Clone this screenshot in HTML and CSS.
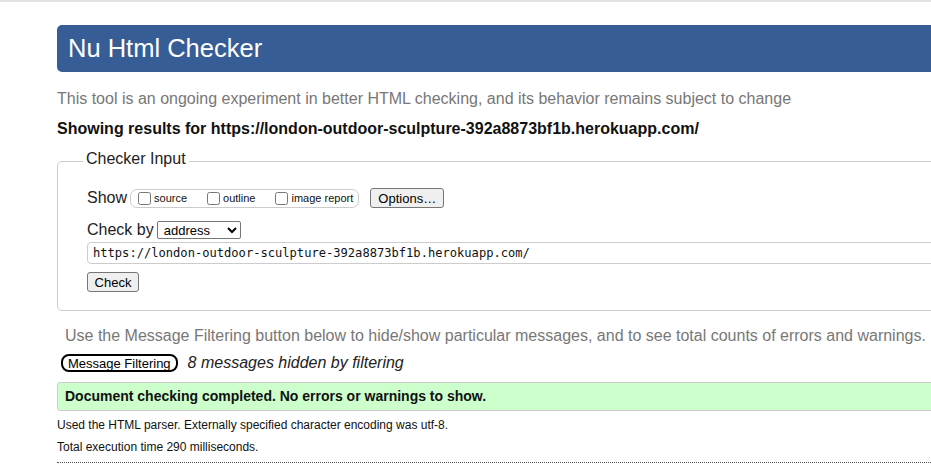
FILE: index.html
```html
<!DOCTYPE html>
<html lang="en">
<head>
<meta charset="utf-8">
<title>Nu Html Checker</title>
<link rel="stylesheet" href="styles.css">
</head>
<body>
<div class="topbar"></div>
<div class="page">
  <h1 class="title">Nu Html Checker</h1>
  <p class="intro">This tool is an ongoing experiment in better HTML checking, and its behavior remains subject to change</p>
  <p class="showing">Showing results for https://london-outdoor-sculpture-392a8873bf1b.herokuapp.com/</p>
  <fieldset class="input-box">
    <legend class="legend">Checker Input</legend>
    <div class="row show-row">
      <span class="label">Show</span>
      <span class="opts">
        <label class="opt"><input type="checkbox" class="cb">source</label>
        <label class="opt"><input type="checkbox" class="cb">outline</label>
        <label class="opt"><input type="checkbox" class="cb">image report</label>
      </span>
      <button class="btn options-btn" type="button">Options…</button>
    </div>
    <div class="row check-row">
      <span class="label">Check by</span>
      <select class="sel"><option>address</option></select>
    </div>
    <input class="url" type="text" value="https://london-outdoor-sculpture-392a8873bf1b.herokuapp.com/">
    <button class="btn check-btn" type="button">Check</button>
  </fieldset>
  <p class="filter-note">Use the Message Filtering button below to hide/show particular messages, and to see total counts of errors and warnings.</p>
  <div class="filter-row">
    <button class="filter-btn" type="button">Message Filtering</button>
    <span class="hidden-count">8 messages hidden by filtering</span>
  </div>
  <div class="success">Document checking completed. No errors or warnings to show.</div>
  <p class="meta">Used the HTML parser. Externally specified character encoding was utf-8.</p>
  <p class="meta">Total execution time 290 milliseconds.</p>
  <hr class="dotted">
</div>
</body>
</html>
```
FILE: styles.css
```css
html, body {
  overflow: hidden;
}
body {
  margin: 0;
  font-family: "Liberation Sans", Arial, sans-serif;
  color: #000;
  background: #fff;
}
.topbar {
  height: 2px;
  background: #e3e3e3;
}
.page {
  margin: 0 -60px 0 57px;
}
.title {
  margin: 23px 0 0;
  height: 47px;
  line-height: 47px;
  padding: 0 11px;
  background: #365d95;
  color: #fff;
  font-size: 25.5px;
  font-weight: normal;
  border-radius: 5px;
}
.intro {
  margin: 17px 0 0;
  font-size: 16px;
  line-height: 20px;
  color: #777;
}
.showing {
  margin: 10px 0 0;
  font-size: 16px;
  line-height: 20px;
  font-weight: bold;
  color: #111;
}
.input-box {
  margin: 10px 0 0;
  padding: 15px 0 18px 29px;
  border: 1px solid #ccc;
  border-radius: 5px;
  min-width: 0;
}
.legend {
  margin-left: -4px;
  padding: 0 3px 4px;
  font-size: 16px;
  line-height: 20px;
  color: #222;
}
.row {
  display: flex;
  align-items: center;
}
.show-row {
  height: 20px;
}
.label {
  font-size: 16px;
  line-height: 20px;
  color: #222;
}
.opts {
  display: flex;
  align-items: center;
  gap: 16px;
  height: 17px;
  margin-left: 3px;
  padding: 0 5px 0 3px;
  border: 1px solid #ccc;
  border-radius: 7px;
}
.opt {
  display: flex;
  align-items: center;
  font-size: 11px;
  color: #111;
}
.cb {
  width: 13px;
  height: 13px;
  margin: 0 3px 0 4px;
}
.btn {
  font-family: "Liberation Sans", Arial, sans-serif;
  font-size: 13px;
  color: #000;
  background: #efefef;
  border: 1px solid #767676;
  border-radius: 3px;
  padding: 1px 6px;
  height: 20px;
}
.options-btn {
  margin-left: 11px;
  width: 74px;
}
.check-row {
  margin-top: 13px;
  height: 18px;
}
.check-row .label {
  line-height: 18px;
}
.sel {
  margin-left: 3px;
  width: 84px;
  height: 18px;
  font-family: "Liberation Sans", Arial, sans-serif;
  font-size: 13px;
  border: 1px solid #767676;
  border-radius: 2px;
  background: #fff;
  padding: 0 0 0 2px;
}
.url {
  display: block;
  box-sizing: border-box;
  width: 100%;
  height: 22px;
  margin-top: 3px;
  padding: 0 5px;
  border: 1px solid #ccc;
  border-radius: 4px;
  font-family: "DejaVu Sans Mono", "Liberation Mono", monospace;
  font-size: 12.1px;
  color: #111;
}
.check-btn {
  display: block;
  margin-top: 8px;
  width: 52px;
}
.filter-note {
  margin: 15px 0 0 8px;
  font-size: 16px;
  line-height: 20px;
  color: #777;
}
.filter-row {
  display: flex;
  align-items: center;
  gap: 10px;
  height: 20px;
  margin: 7px 0 0 4px;
}
.filter-btn {
  height: 18px;
  padding: 0 5px;
  font-family: "Liberation Sans", Arial, sans-serif;
  font-size: 13px;
  color: #000;
  background: #fff;
  border: 2px solid #000;
  border-radius: 8px;
}
.hidden-count {
  font-size: 16px;
  font-style: italic;
  color: #222;
}
.success {
  margin-top: 9px;
  height: 27px;
  line-height: 27px;
  padding-left: 7px;
  background: #ccffcc;
  border: 1px solid #ccc;
  border-radius: 3px;
  font-size: 14px;
  font-weight: bold;
  color: #111;
}
.meta {
  margin: 7px 0 0;
  font-size: 12px;
  line-height: 15px;
  color: #111;
}
.dotted {
  margin: 7px 0 0;
  border: 0;
  border-top: 1px dotted #555;
  height: 0;
}
```
